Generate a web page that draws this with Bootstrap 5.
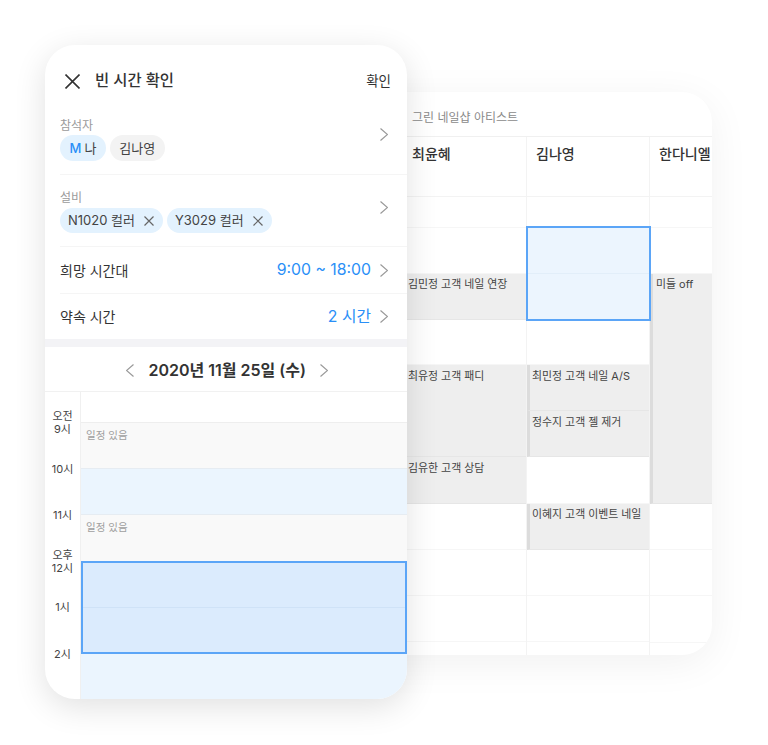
<!DOCTYPE html>
<html lang="ko">
<head>
    <meta charset="UTF-8">
    <title>빈 시간 확인</title>
    <link rel="stylesheet" href="https://cdn.jsdelivr.net/npm/bootstrap@5.3.3/dist/css/bootstrap.min.css">
    <style>
        body {
            background: #fff;
            font-family: Inter, "Noto Sans CJK KR", sans-serif;
            color: #333;
        }
        .stage { width: 768px; height: 745px; position: relative; overflow: hidden; }

        /* back card */
        .back-card {
            position: absolute; left: 300px; top: 92px; width: 412px; height: 563px;
            background: #fff; border-radius: 30px; overflow: hidden;
            box-shadow: 0 8px 40px rgba(0,0,0,.06);
            padding-left: 107px;
        }
        .back-title { height: 45px; padding: 16px 0 0 5px; font-size: 12px; line-height: 20px; color: #8a8a8a; border-bottom: 1px solid #f0f0f0; }
        .sched-col { flex: none; border-right: 1px solid #f3f3f3; }
        .col-a { width: 120px; }
        .col-b { width: 123px; }
        .col-c { width: 62px; border-right: 0; }
        .name-cell { height: 60px; padding: 7px 0 0 5px; font-size: 14px; font-weight: 500; line-height: 20px; color: #333; border-bottom: 1px solid #f3f3f3; white-space: nowrap; overflow: hidden; }
        .col-b .name-cell, .col-c .name-cell { padding-left: 9px; }
        .top-slot { height: 30.5px; border-bottom: 1px solid #f6f6f6; }
        .slot { height: 46.2px; border-bottom: 1px solid #f6f6f6; }
        .slot-short { height: 45.2px; }
        .slot-2 { height: 92.4px; }
        .slot-5 { height: 230.4px; }
        .slot-end { height: 20px; }
        .booked {
            background: #eeeeee; border-bottom: 1px solid #e6e6e6; border-left: 3px solid #dcdcdc;
            font-size: 10.9px; line-height: 16px; color: #444; padding: 2.5px 0 0 2px; white-space: nowrap; overflow: hidden;
        }
        .col-a .booked { border-left: 0; padding-left: 1px; }
        .col-c .booked { padding-left: 3px; }
        .pick-back { position: relative; z-index: 1; width: 125px; height: 95.4px; background: #ecf5fe; border: 2px solid #5ba5f7; margin: -2px 0 -1px -1px; }
        .pick-back-mid { height: 46px; border-bottom: 1px solid #e2eef9; }

        /* front card */
        .front-card {
            position: absolute; left: 45px; top: 45px; width: 362px; height: 654px;
            background: #fff; border-radius: 30px; overflow: hidden;
            box-shadow: 0 8px 32px rgba(0,0,0,.12);
            z-index: 2;
        }
        .top-bar { height: 65px; padding: 7px 16px 0 20px; }
        .top-title { font-size: 15.4px; font-weight: 500; color: #333; margin-left: 15px; }
        .top-ok { font-size: 13.5px; color: #333; }
        .field { margin-left: 15px; padding-right: 19px; border-bottom: 1px solid #f5f5f5; }
        .field-a { height: 65px; padding-top: 8px; }
        .field-b { height: 72px; padding-top: 15px; }
        .field-c { height: 47px; font-size: 14px; color: #333; }
        .field-d { height: 45px; font-size: 14px; color: #333; border-bottom: 0; }
        .field-label { font-size: 12px; line-height: 16px; color: #9b9b9b; margin-bottom: 1px; }
        .field-b .field-label { margin-bottom: 2px; }
        .chip { height: 26px; border-radius: 13px; font-size: 13px; padding: 1px 9.5px 0; background: #f3f3f3; color: #444; white-space: nowrap; }
        .field-b .chip { height: 25px; padding: 0 9px 0 8px; }
        .chip-blue { background: #e3f2fe; }
        .chip-me { color: #2a8ff7; font-weight: 500; margin-right: 3px; }
        .chip-x { margin-left: 9px; }
        .chev-a { margin-top: 10px; }
        .chev-b { margin-top: 11px; }
        .pick-value { font-size: 15.8px; color: #2a8ff7; margin-right: 9px; }
        .band { height: 8px; background: #f3f3f6; }
        .date-bar { height: 45px; border-bottom: 1px solid #f1f1f1; gap: 15px; padding: 2px 0 0 1px; }
        .date-text { font-size: 16px; font-weight: 600; color: #333; width: 156px; text-align: center; white-space: nowrap; }
        .time-col { width: 35px; flex: none; padding-top: 8px; }
        .time-label { height: 46.2px; font-size: 11px; line-height: 13px; color: #444; text-align: center; }
        .day-col { flex: 1; border-left: 1px solid #f0f0f0; }
        .hour-free { height: 31px; border-bottom: 1px solid #eee; }
        .hour { height: 46.2px; border-bottom: 1px solid #e6ecf2; }
        .hour-busy { background: #f9f9f9; font-size: 10.5px; line-height: 16px; color: #a0a0a0; padding: 5px 0 0 5px; }
        .hour-open { background: #ebf5fe; }
        .pick-front { height: 93px; background: #dbebfd; border: 2px solid #5ba5f7; margin-top: -1px; position: relative; }
        .pick-mid { height: 45px; border-bottom: 1px solid #cfe2f7; }
        .hour-rest { height: 60px; background: #ebf5fe; }
    </style>
</head>
<body>
<div class="stage">

    <div class="back-card">
        <div class="back-title">그린 네일샵 아티스트</div>
        <div class="d-flex">
            <div class="sched-col col-a">
                <div class="name-cell">최윤혜</div>
                <div class="top-slot"></div>
                <div class="slot"></div>
                <div class="slot booked">김민정 고객 네일 연장</div>
                <div class="slot slot-short"></div>
                <div class="slot slot-2 booked">최유정 고객 패디</div>
                <div class="slot booked">김유한 고객 상담</div>
                <div class="slot"></div>
                <div class="slot"></div>
                <div class="slot"></div>
                <div class="slot-end"></div>
            </div>
            <div class="sched-col col-b">
                <div class="name-cell">김나영</div>
                <div class="top-slot"></div>
                <div class="pick-back"><div class="pick-back-mid"></div></div>
                <div class="slot slot-short"></div>
                <div class="slot booked">최민정 고객 네일 A/S</div>
                <div class="slot booked">정수지 고객 젤 제거</div>
                <div class="slot"></div>
                <div class="slot booked">이혜지 고객 이벤트 네일</div>
                <div class="slot"></div>
                <div class="slot"></div>
                <div class="slot-end"></div>
            </div>
            <div class="sched-col col-c">
                <div class="name-cell">한다니엘</div>
                <div class="top-slot"></div>
                <div class="slot"></div>
                <div class="slot slot-5 booked">미들 off</div>
                <div class="slot"></div>
                <div class="slot"></div>
                <div class="slot"></div>
                <div class="slot-end"></div>
            </div>
        </div>
    </div>

    <div class="front-card">
        <div class="top-bar d-flex align-items-center">
            <svg width="15" height="15" viewBox="0 0 15 15" fill="none" stroke="#333" stroke-width="1.6"><path d="M.5.5l14 14M14.500.5l-14 14"/></svg>
            <div class="top-title flex-grow-1">빈 시간 확인</div>
            <div class="top-ok">확인</div>
        </div>

        <div class="field field-a d-flex align-items-start justify-content-between">
            <div>
                <div class="field-label">참석자</div>
                <div class="d-flex gap-1">
                    <div class="chip chip-blue d-flex align-items-center"><span class="chip-me">M</span>나</div>
                    <div class="chip d-flex align-items-center">김나영</div>
                </div>
            </div>
            <svg class="chev-a" width="8" height="13" viewBox="0 0 8 13" fill="none" stroke="#999" stroke-width="1.2"><path d="M.5.500l7 6-7 6"/></svg>
        </div>

        <div class="field field-b d-flex align-items-start justify-content-between">
            <div>
                <div class="field-label">설비</div>
                <div class="d-flex gap-1">
                    <div class="chip chip-blue d-flex align-items-center">N1020 컬러
                        <svg class="chip-x" width="10" height="10" viewBox="0 0 10 10" fill="none" stroke="#666" stroke-width="1.2"><path d="M.5.5l9 9M9.500.5l-9 9"/></svg>
                    </div>
                    <div class="chip chip-blue d-flex align-items-center">Y3029 컬러
                        <svg class="chip-x" width="10" height="10" viewBox="0 0 10 10" fill="none" stroke="#666" stroke-width="1.2"><path d="M.5.5l9 9M9.500.5l-9 9"/></svg>
                    </div>
                </div>
            </div>
            <svg class="chev-b" width="8" height="13" viewBox="0 0 8 13" fill="none" stroke="#999" stroke-width="1.2"><path d="M.5.500l7 6-7 6"/></svg>
        </div>

        <div class="field field-c d-flex align-items-center">
            <div class="flex-grow-1">희망 시간대</div>
            <div class="pick-value">9:00 ~ 18:00</div>
            <svg width="8" height="13" viewBox="0 0 8 13" fill="none" stroke="#999" stroke-width="1.2"><path d="M.5.500l7 6-7 6"/></svg>
        </div>

        <div class="field field-d d-flex align-items-center">
            <div class="flex-grow-1">약속 시간</div>
            <div class="pick-value">2 시간</div>
            <svg width="8" height="13" viewBox="0 0 8 13" fill="none" stroke="#999" stroke-width="1.2"><path d="M.5.500l7 6-7 6"/></svg>
        </div>

        <div class="band"></div>

        <div class="date-bar d-flex align-items-center justify-content-center">
            <svg width="8" height="13" viewBox="0 0 8 13" fill="none" stroke="#999" stroke-width="1.2"><path d="M7.500.500l-7 6 7 6"/></svg>
            <div class="date-text">2020년 11월 25일 (수)</div>
            <svg width="8" height="13" viewBox="0 0 8 13" fill="none" stroke="#999" stroke-width="1.2"><path d="M.5.500l7 6-7 6"/></svg>
        </div>

        <div class="d-flex">
            <div class="time-col">
                <div class="time-label d-flex align-items-center justify-content-center">오전<br>9시</div>
                <div class="time-label d-flex align-items-center justify-content-center">10시</div>
                <div class="time-label d-flex align-items-center justify-content-center">11시</div>
                <div class="time-label d-flex align-items-center justify-content-center">오후<br>12시</div>
                <div class="time-label d-flex align-items-center justify-content-center">1시</div>
                <div class="time-label d-flex align-items-center justify-content-center">2시</div>
            </div>
            <div class="day-col">
                <div class="hour-free"></div>
                <div class="hour hour-busy">일정 있음</div>
                <div class="hour hour-open"></div>
                <div class="hour hour-busy">일정 있음</div>
                <div class="pick-front"><div class="pick-mid"></div></div>
                <div class="hour-rest"></div>
            </div>
        </div>
    </div>

</div>
<script src="https://cdn.jsdelivr.net/npm/bootstrap@5.3.3/dist/js/bootstrap.bundle.min.js"></script>
</body>
</html>
